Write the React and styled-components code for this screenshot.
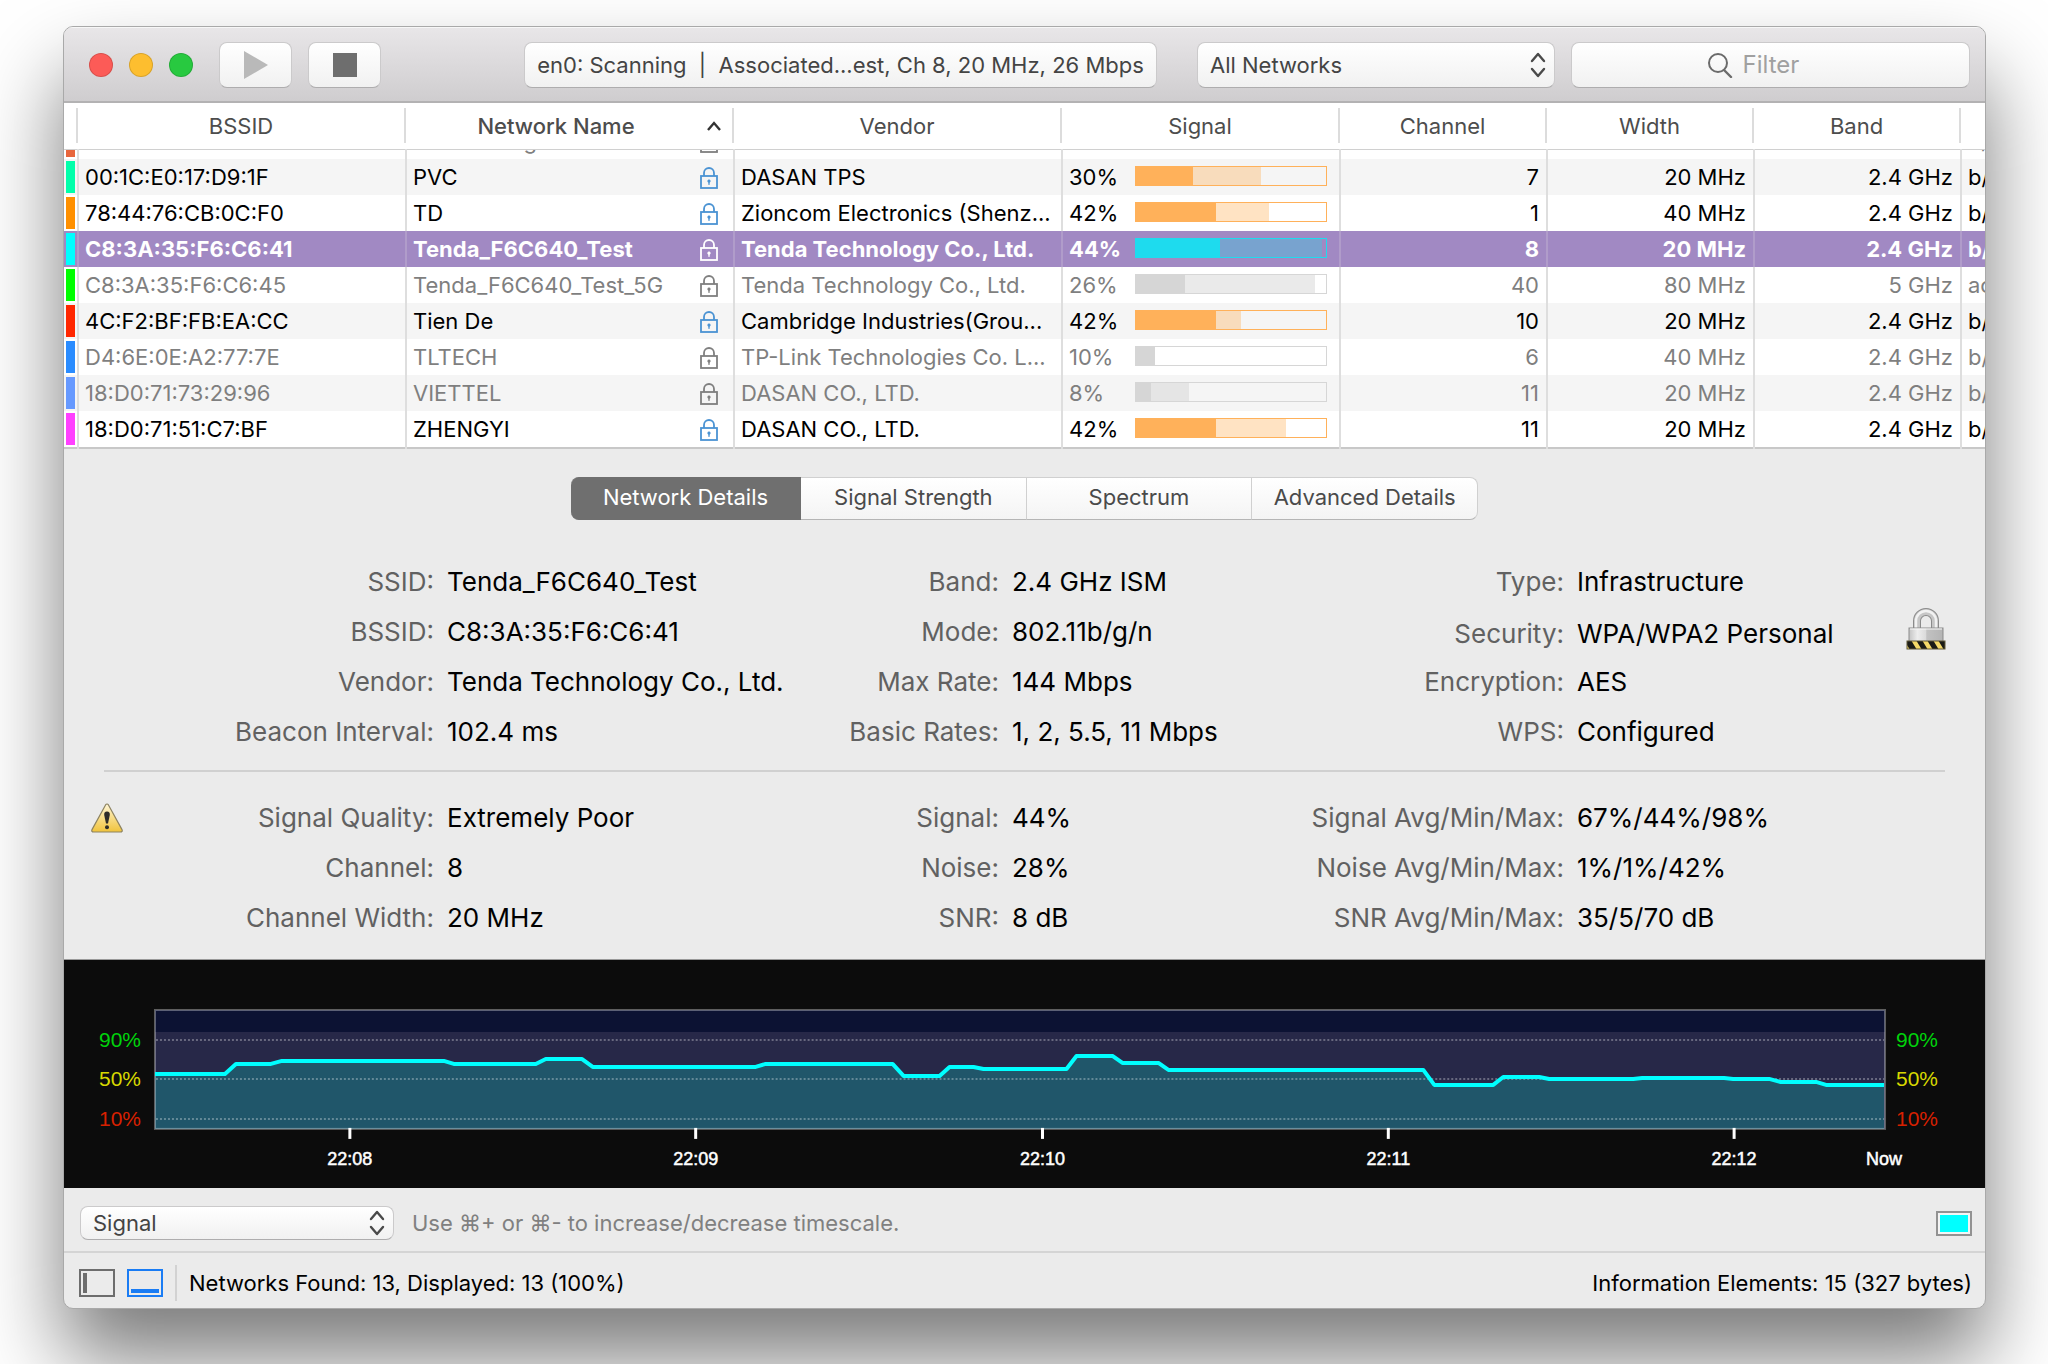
import { useState } from "react";
import styled, { createGlobalStyle, css } from "styled-components";

const columns = [
  { key: "bssid", label: "BSSID", width: 328 },
  { key: "name", label: "Network Name", width: 328, sorted: true },
  { key: "vendor", label: "Vendor", width: 328 },
  { key: "signal", label: "Signal", width: 278 },
  { key: "channel", label: "Channel", width: 207 },
  { key: "width", label: "Width", width: 207 },
  { key: "band", label: "Band", width: 207 },
];

const networks = [
  {
    color: "#e8663d",
    name: "Thanh Long",
    signal: 20,
    peak: 20,
    mode: "b/g/n",
    tone: "dim",
    clipped: true,
  },
  {
    color: "#00ffaa",
    bssid: "00:1C:E0:17:D9:1F",
    name: "PVC",
    vendor: "DASAN TPS",
    signal: 30,
    peak: 66,
    channel: "7",
    width: "20 MHz",
    band: "2.4 GHz",
    mode: "b/g/n",
  },
  {
    color: "#ff9000",
    bssid: "78:44:76:CB:0C:F0",
    name: "TD",
    vendor: "Zioncom Electronics (Shenz...",
    signal: 42,
    peak: 70,
    channel: "1",
    width: "40 MHz",
    band: "2.4 GHz",
    mode: "b/g/n",
  },
  {
    color: "#00ffff",
    bssid: "C8:3A:35:F6:C6:41",
    name: "Tenda_F6C640_Test",
    vendor: "Tenda Technology Co., Ltd.",
    signal: 44,
    peak: 98,
    channel: "8",
    width: "20 MHz",
    band: "2.4 GHz",
    mode: "b/g/n",
    tone: "selected",
  },
  {
    color: "#00ff00",
    bssid: "C8:3A:35:F6:C6:45",
    name: "Tenda_F6C640_Test_5G",
    vendor: "Tenda Technology Co., Ltd.",
    signal: 26,
    peak: 94,
    channel: "40",
    width: "80 MHz",
    band: "5 GHz",
    mode: "ac",
    tone: "dim",
  },
  {
    color: "#ff2600",
    bssid: "4C:F2:BF:FB:EA:CC",
    name: "Tien De",
    vendor: "Cambridge Industries(Grou...",
    signal: 42,
    peak: 55,
    channel: "10",
    width: "20 MHz",
    band: "2.4 GHz",
    mode: "b/g/n",
  },
  {
    color: "#2a8cff",
    bssid: "D4:6E:0E:A2:77:7E",
    name: "TLTECH",
    vendor: "TP-Link Technologies Co. L...",
    signal: 10,
    peak: 10,
    channel: "6",
    width: "40 MHz",
    band: "2.4 GHz",
    mode: "b/g/n",
    tone: "dim",
  },
  {
    color: "#6699ff",
    bssid: "18:D0:71:73:29:96",
    name: "VIETTEL",
    vendor: "DASAN CO., LTD.",
    signal: 8,
    peak: 28,
    channel: "11",
    width: "20 MHz",
    band: "2.4 GHz",
    mode: "b/g/n",
    tone: "dim",
  },
  {
    color: "#ff40ff",
    bssid: "18:D0:71:51:C7:BF",
    name: "ZHENGYI",
    vendor: "DASAN CO., LTD.",
    signal: 42,
    peak: 79,
    channel: "11",
    width: "20 MHz",
    band: "2.4 GHz",
    mode: "b/g/n",
  },
];

const tabs = [
  "Network Details",
  "Signal Strength",
  "Spectrum",
  "Advanced Details",
];

const networkInfo = [
  [
    ["SSID", "Tenda_F6C640_Test"],
    ["BSSID", "C8:3A:35:F6:C6:41"],
    ["Vendor", "Tenda Technology Co., Ltd."],
    ["Beacon Interval", "102.4 ms"],
  ],
  [
    ["Band", "2.4 GHz ISM"],
    ["Mode", "802.11b/g/n"],
    ["Max Rate", "144 Mbps"],
    ["Basic Rates", "1, 2, 5.5, 11 Mbps"],
  ],
  [
    ["Type", "Infrastructure"],
    ["Security", "WPA/WPA2 Personal", "lock"],
    ["Encryption", "AES"],
    ["WPS", "Configured"],
  ],
];

const signalInfo = [
  [
    ["Signal Quality", "Extremely Poor", "warning"],
    ["Channel", "8"],
    ["Channel Width", "20 MHz"],
  ],
  [
    ["Signal", "44%"],
    ["Noise", "28%"],
    ["SNR", "8 dB"],
  ],
  [
    ["Signal Avg/Min/Max", "67%/44%/98%"],
    ["Noise Avg/Min/Max", "1%/1%/42%"],
    ["SNR Avg/Min/Max", "35/5/70 dB"],
  ],
];

const signalLine =
  "91,114 161,114 172,104 207,104 218,101 380,101 390,104 472,104 482,99 518,99 529,107 692,107 702,104 829,104 840,116 876,116 886,107 910,107 920,109 1003,109 1013,96 1049,96 1059,103 1095,103 1105,110 1360,110 1371,125 1430,125 1440,117 1476,117 1486,119 1570,119 1579,118 1661,118 1670,119 1706,119 1717,122 1753,122 1763,125 1821,125";

const levels = [
  { label: "90%", y: 80, color: "#00d30b" },
  { label: "50%", y: 119, color: "#d8d800" },
  { label: "10%", y: 159, color: "#d82000" },
];

const times = [
  { label: "22:08", x: 286 },
  { label: "22:09", x: 632 },
  { label: "22:10", x: 979 },
  { label: "22:11", x: 1325 },
  { label: "22:12", x: 1671 },
];

const LockGlyph = () => (
  <svg width="18" height="22" viewBox="0 0 18 22" fill="none">
    <path
      d="M4 9V6a5 5 0 0 1 10 0v3"
      stroke="currentColor"
      strokeWidth="1.8"
    />
    <rect
      x="1"
      y="9"
      width="16"
      height="12"
      stroke="currentColor"
      strokeWidth="1.8"
    />
    <path
      d="M9 12.6a1.6 1.6 0 0 1 .8 3l-.3 2.4h-1l-.3-2.4a1.6 1.6 0 0 1 .8-3z"
      fill="currentColor"
    />
  </svg>
);

const Chevrons = () => (
  <ChevronIcon width="18" height="28" viewBox="0 0 18 28" fill="none">
    <path
      d="M3 10l6-7 6 7M3 18l6 7 6-7"
      stroke="#4a4a4a"
      strokeWidth="2.4"
      strokeLinecap="round"
      strokeLinejoin="round"
    />
  </ChevronIcon>
);

const WarningIcon = () => (
  <svg width="32" height="30" viewBox="0 0 32 30">
    <defs>
      <linearGradient id="warn" x1="0" y1="0" x2="0" y2="1">
        <stop offset="0" stopColor="#fff6d8" />
        <stop offset="0.5" stopColor="#f8dc86" />
        <stop offset="1" stopColor="#f0c33c" />
      </linearGradient>
    </defs>
    <path
      d="M14.4 2.2q1.6-2.4 3.2 0L31 26.6q.9 2.4-1.6 2.4H2.6Q.1 29 1 26.6z"
      fill="url(#warn)"
      stroke="#8d8361"
      strokeWidth="1.2"
    />
    <path
      d="M16 8.5c2.2 0 3 1.4 2.8 3.6L17 20.600h-2l-1.800-8.500c-.2-2.200.6-3.600 2.800-3.600z"
      fill="#2e2c28"
    />
    <circle cx="16" cy="24.2" r="2" fill="#2e2c28" />
  </svg>
);

const PadlockIcon = () => (
  <svg width="40" height="43" viewBox="0 0 40 43">
    <defs>
      <linearGradient id="steel" x1="0" y1="0" x2="1" y2="0">
        <stop offset="0" stopColor="#c4c4c4" />
        <stop offset="0.25" stopColor="#ededed" />
        <stop offset="0.5" stopColor="#dadada" />
        <stop offset="0.52" stopColor="#c2c2c2" />
        <stop offset="1" stopColor="#b4b4b4" />
      </linearGradient>
      <clipPath id="tape">
        <rect x="1" y="34" width="38" height="8" />
      </clipPath>
    </defs>
    <path
      d="M11 22V14a9 9 0 0 1 18 0V22"
      fill="none"
      stroke="#8b8b8b"
      strokeWidth="8"
    />
    <path
      d="M11 22V14a9 9 0 0 1 18 0V22"
      fill="none"
      stroke="#c6c6c6"
      strokeWidth="6"
    />
    <path
      d="M10 22V14a10 10 0 0 1 20 0V22"
      fill="none"
      stroke="#f2f2f2"
      strokeWidth="2.4"
    />
    <rect x="3" y="21" width="34" height="14" fill="url(#steel)" stroke="#8b8b8b" />
    <path d="M4 22h32" stroke="#f8f8f8" />
    <g clipPath="url(#tape)">
      <rect x="1" y="34" width="38" height="8" fill="#f5d968" />
      <path
        d="M-2 33h7l6 10H4zM10 33h6l6 10h-6zM21 33h6l6 10h-6zM32 33h6l6 10h-6z"
        fill="#1b1b17"
      />
    </g>
    <rect x="1" y="34" width="38" height="8" fill="none" stroke="#5e5636" />
  </svg>
);

const SearchIcon = () => (
  <svg width="26" height="26" viewBox="0 0 26 26" fill="none">
    <circle cx="11" cy="11" r="9" stroke="#6b6b6b" strokeWidth="2" />
    <path
      d="M17 18l7 7"
      stroke="#6b6b6b"
      strokeWidth="2.4"
      strokeLinecap="round"
    />
  </svg>
);

const NetworkRow = ({ network, striped }) => {
  const { tone, clipped } = network;
  return (
    <Row $tone={tone} $striped={striped}>
      <Cell>
        <CellBody $clipped={clipped} $tag>
          <ColorTag $color={network.color} />
        </CellBody>
      </Cell>
      <Cell>
        <CellBody $clipped={clipped}>{network.bssid}</CellBody>
      </Cell>
      <Cell>
        <CellBody $clipped={clipped} $between>
          <span>{network.name}</span>
          <LockSlot $tone={tone}>
            <LockGlyph />
          </LockSlot>
        </CellBody>
      </Cell>
      <Cell>
        <CellBody $clipped={clipped}>{network.vendor}</CellBody>
      </Cell>
      <Cell>
        <CellBody $clipped={clipped}>
          <Percent>{clipped ? "" : `${network.signal}%`}</Percent>
          <Meter $tone={tone}>
            <MeterPeak $tone={tone} style={{ width: `${network.peak}%` }} />
            <MeterFill $tone={tone} style={{ width: `${network.signal}%` }} />
          </Meter>
        </CellBody>
      </Cell>
      {["channel", "width", "band"].map((key) => (
        <Cell key={key}>
          <CellBody $clipped={clipped} $right>
            {network[key]}
          </CellBody>
        </Cell>
      ))}
      <Cell>
        <CellBody $clipped={clipped}>{network.mode}</CellBody>
      </Cell>
    </Row>
  );
};

const InfoGroups = ({ groups }) => (
  <Groups>
    {groups.map((rows) => (
      <Group key={rows[0][0]}>
        {rows.map(([label, value, icon]) => (
          <InfoRow key={label}>
            <dt>
              {icon === "warning" && (
                <WarningSlot>
                  <WarningIcon />
                </WarningSlot>
              )}
              {label}:
            </dt>
            <dd>
              {value}
              {icon === "lock" && (
                <PadlockSlot>
                  <PadlockIcon />
                </PadlockSlot>
              )}
            </dd>
          </InfoRow>
        ))}
      </Group>
    ))}
  </Groups>
);

const SignalChart = () => (
  <ChartPanel>
    <svg viewBox="0 0 1922 229" role="img" aria-label="Signal over time">
      <rect x="91" y="50" width="1731" height="119" fill="#0c1233" />
      <rect x="91" y="72" width="1731" height="97" fill="#272848" />
      <polygon points={`${signalLine} 1821,169 91,169`} fill="#20566a" />
      {levels.map((level) => (
        <line
          key={level.label}
          x1="92"
          x2="1821"
          y1={level.y}
          y2={level.y}
          stroke="#ffffff"
          strokeOpacity="0.3"
          strokeWidth="2"
          strokeDasharray="2 2"
        />
      ))}
      <rect
        x="91"
        y="50"
        width="1731"
        height="119"
        fill="none"
        stroke="#ffffff"
        strokeOpacity="0.34"
        strokeWidth="2"
      />
      <polyline
        points={signalLine}
        fill="none"
        stroke="#00ffff"
        strokeWidth="4"
        strokeLinejoin="round"
      />
      {levels.map((level) => (
        <g key={level.label} fill={level.color} fontSize="21">
          <text x="77" y={level.y + 7} textAnchor="end">
            {level.label}
          </text>
          <text x="1833" y={level.y + 7}>
            {level.label}
          </text>
        </g>
      ))}
      <g fill="#ffffff" stroke="#ffffff" fontSize="18" textAnchor="middle">
        {times.map((time) => (
          <g key={time.label}>
            <path d={`M${time.x} 168v11`} strokeWidth="3" />
            <text x={time.x} y="205" strokeWidth="0.5">
              {time.label}
            </text>
          </g>
        ))}
        <text x="1821" y="205" strokeWidth="0.5">
          Now
        </text>
      </g>
    </svg>
  </ChartPanel>
);

const App = () => {
  const [activeTab, setActiveTab] = useState(tabs[0]);

  return (
    <>
      <GlobalStyle />
      <Window>
        <Toolbar>
          <TrafficLights>
            <Light $color="#fc5b57" aria-label="Close" />
            <Light $color="#fdbe2f" aria-label="Minimize" />
            <Light $color="#28c940" aria-label="Zoom" />
          </TrafficLights>
          <ToolButton aria-label="Start scan">
            <svg width="24" height="28" viewBox="0 0 24 28">
              <path d="M0 0l24 14L0 28z" fill="#b9b9b9" />
            </svg>
          </ToolButton>
          <ToolButton aria-label="Stop scan">
            <svg width="24" height="24" viewBox="0 0 24 24">
              <path d="M0 0h24v24H0z" fill="#6e6e6e" />
            </svg>
          </ToolButton>
          <ScanStatus>
            en0: Scanning&nbsp; | &nbsp;Associated...est, Ch 8, 20 MHz, 26 Mbps
          </ScanStatus>
          <SelectBox $large>
            <select aria-label="Network filter">
              <option>All Networks</option>
            </select>
            <Chevrons />
          </SelectBox>
          <SearchField>
            <SearchIcon />
            <input type="text" placeholder="Filter" aria-label="Filter" />
          </SearchField>
        </Toolbar>

        <NetworkTable>
          <colgroup>
            <Col $width={14} />
            {columns.map((column) => (
              <Col key={column.key} $width={column.width} />
            ))}
            <col />
          </colgroup>
          <thead>
            <tr>
              <HeaderCell>
                <HeaderLabel />
              </HeaderCell>
              {columns.map((column) => (
                <HeaderCell key={column.key}>
                  <HeaderLabel $sorted={column.sorted}>
                    <span>{column.label}</span>
                    {column.sorted && (
                      <svg width="16" height="12" viewBox="0 0 16 12" fill="none">
                        <path d="M2 10l6-7 6 7" stroke="#333" strokeWidth="2.4" />
                      </svg>
                    )}
                  </HeaderLabel>
                </HeaderCell>
              ))}
              <HeaderCell />
            </tr>
          </thead>
          <tbody>
            {networks.map((network, index) => (
              <NetworkRow
                key={network.color}
                network={network}
                striped={index % 2 === 1}
              />
            ))}
          </tbody>
        </NetworkTable>

        <Details>
          <Tabs role="tablist">
            {tabs.map((tab) => (
              <Tab
                key={tab}
                role="tab"
                aria-selected={tab === activeTab}
                $active={tab === activeTab}
                onClick={() => setActiveTab(tab)}
              >
                {tab}
              </Tab>
            ))}
          </Tabs>
          <InfoGroups groups={networkInfo} />
          <Divider />
          <InfoGroups groups={signalInfo} />
        </Details>

        <SignalChart />

        <ChartControls>
          <SelectBox>
            <select aria-label="Chart value">
              <option>Signal</option>
            </select>
            <Chevrons />
          </SelectBox>
          <Hint>Use ⌘+ or ⌘- to increase/decrease timescale.</Hint>
          <Swatch aria-label="Line color" />
        </ChartControls>

        <StatusBar>
          <PaneButton aria-label="Toggle sidebar">
            <svg width="36" height="28" viewBox="0 0 36 28">
              <rect
                x="1"
                y="1"
                width="34"
                height="26"
                fill="none"
                stroke="#6d6d6d"
                strokeWidth="2"
              />
              <rect x="4" y="4" width="4" height="20" fill="#6d6d6d" />
            </svg>
          </PaneButton>
          <PaneButton aria-label="Toggle details">
            <svg width="36" height="28" viewBox="0 0 36 28">
              <rect
                x="1"
                y="1"
                width="34"
                height="26"
                fill="none"
                stroke="#1a7cf4"
                strokeWidth="2"
              />
              <rect x="4" y="20" width="28" height="4" fill="#1a7cf4" />
            </svg>
          </PaneButton>
          <Found>Networks Found: 13, Displayed: 13 (100%)</Found>
          <span>Information Elements: 15 (327 bytes)</span>
        </StatusBar>
      </Window>
    </>
  );
};

const GlobalStyle = createGlobalStyle`
  * {
    box-sizing: border-box;
  }
  body {
    margin: 0;
    background: #fff;
    font-family: Inter, "Liberation Sans", sans-serif;
    font-size: 22px;
    color: #000;
  }
  #root {
    display: flow-root;
    overflow: hidden;
  }
  button,
  select,
  input {
    font: inherit;
    color: inherit;
    margin: 0;
    padding: 0;
  }
  svg {
    display: block;
    flex-shrink: 0;
  }
`;

const raised = css`
  background: linear-gradient(#fff, #f1f1f1);
  border: 1px solid #cbcacb;
  border-bottom-color: #aeadae;
  border-radius: 8px;
`;

const Window = styled.main`
  margin: 26px 62px 55px 63px;
  border: 1px solid #a9a9a9;
  border-radius: 10px;
  overflow: hidden;
  background: #ebebeb;
  box-shadow: 0 50px 84px rgba(0, 0, 0, 0.52);
`;

const Toolbar = styled.header`
  display: flex;
  align-items: center;
  gap: 16px;
  height: 76px;
  padding: 0 15px 0 25px;
  background: linear-gradient(#e8e6e8, #cfcdcf);
  border-top: 1px solid #f7f7f7;
  border-bottom: 2px solid #b3b2b3;
  color: #444;
`;

const TrafficLights = styled.div`
  display: flex;
  gap: 16px;
  margin-right: 10px;
`;

const Light = styled.button`
  width: 24px;
  height: 24px;
  border: 1px solid rgba(0, 0, 0, 0.14);
  border-radius: 50%;
  background: ${({ $color }) => $color};
`;

const ToolButton = styled.button`
  ${raised}
  display: flex;
  justify-content: center;
  align-items: center;
  width: 73px;
  height: 46px;
`;

const ScanStatus = styled.div`
  ${raised}
  display: flex;
  justify-content: center;
  align-items: center;
  width: 633px;
  height: 46px;
  margin: 0 24px 0 auto;
  white-space: nowrap;
`;

const SelectBox = styled.div`
  position: relative;
  width: ${({ $large }) => ($large ? "358px" : "314px")};
  select {
    ${raised}
    appearance: none;
    width: 100%;
    height: ${({ $large }) => ($large ? "46px" : "34px")};
    padding: 0 12px;
    color: #444;
  }
`;

const ChevronIcon = styled.svg`
  position: absolute;
  top: 50%;
  right: 8px;
  transform: translateY(-50%);
  pointer-events: none;
`;

const SearchField = styled.label`
  ${raised}
  display: flex;
  justify-content: center;
  align-items: center;
  gap: 10px;
  width: 399px;
  height: 46px;
  input {
    width: 92px;
    border: none;
    outline: none;
    background: none;
    font-size: 24px;
  }
  input::placeholder {
    color: #a0a0a0;
    opacity: 1;
  }
`;

const NetworkTable = styled.table`
  width: 100%;
  table-layout: fixed;
  border-collapse: collapse;
  background: #fff;
  border-bottom: 2px solid #c8c8c8;
`;

const Col = styled.col`
  width: ${({ $width }) => $width}px;
`;

const HeaderCell = styled.th`
  height: 46px;
  padding: 0;
  border-bottom: 1px solid #d0d0d0;
  font-weight: 400;
  color: #4d4d4d;
`;

const HeaderLabel = styled.div`
  display: flex;
  justify-content: center;
  align-items: center;
  height: 35px;
  border-right: 2px solid #dcdcdc;
  font-weight: ${({ $sorted }) => ($sorted ? 500 : 400)};
  padding-right: ${({ $sorted }) => ($sorted ? "10px" : 0)};
  span {
    flex: ${({ $sorted }) => ($sorted ? 1 : "none")};
  }
`;

const rowColor = { dim: "#7f7f7f", selected: "#fff" };

const Cell = styled.td`
  padding: 0;
  border-right: 2px solid #dedede;
  &:last-child {
    border-right: none;
  }
`;

const Row = styled.tr`
  color: ${({ $tone }) => rowColor[$tone] || "#000"};
  background: ${({ $striped }) => ($striped ? "#f5f5f5" : "#fff")};
  ${({ $tone }) =>
    $tone === "selected" &&
    css`
      background: #a189c3;
      font-weight: 700;
      ${Cell} {
        border-color: #b09cca;
      }
    `}
`;

const CellBody = styled.div`
  display: flex;
  align-items: ${({ $clipped }) => ($clipped ? "flex-end" : "center")};
  justify-content: ${({ $right, $between }) =>
    $right ? "flex-end" : $between ? "space-between" : "flex-start"};
  height: ${({ $clipped }) => ($clipped ? "9px" : "36px")};
  padding: ${({ $tag, $right }) =>
    $tag ? "0 2px" : $right ? "0 7px" : "0 0 0 6px"};
  overflow: hidden;
  line-height: 36px;
  white-space: nowrap;
`;

const ColorTag = styled.span`
  width: 9px;
  height: 32px;
  margin-bottom: 2px;
  align-self: flex-end;
  background: ${({ $color }) => $color};
`;

const lockColor = { dim: "#7f7f7f", selected: "#fff" };

const LockSlot = styled.span`
  padding: 8px 15px 6px 0;
  color: ${({ $tone }) => lockColor[$tone] || "#4b93d3"};
`;

const Percent = styled.span`
  width: 66px;
  flex-shrink: 0;
`;

const meterTones = {
  dim: ["#d6d6d6", "rgba(214, 214, 214, 0.5)"],
  selected: ["#1edbee", "rgba(80, 190, 220, 0.5)"],
  normal: ["#ffb15a", "rgba(255, 177, 90, 0.36)"],
};

const meterTone = (tone) => meterTones[tone] || meterTones.normal;

const Meter = styled.div`
  display: grid;
  width: 192px;
  height: 20px;
  flex-shrink: 0;
  margin: 7px 0 9px;
  border: 1px solid ${({ $tone }) => meterTone($tone)[0]};
`;

const MeterPeak = styled.div`
  grid-area: 1 / 1;
  background: ${({ $tone }) => meterTone($tone)[1]};
`;

const MeterFill = styled.div`
  grid-area: 1 / 1;
  background: ${({ $tone }) => meterTone($tone)[0]};
`;

const Details = styled.section`
  padding: 28px 0 16px;
`;

const Tabs = styled.div`
  display: grid;
  grid-template-columns: 230px 1fr 1fr 1fr;
  width: 907px;
  max-width: 100%;
  margin: 0 auto 37px;
`;

const Tab = styled.button`
  height: 43px;
  padding-bottom: 2px;
  background: ${({ $active }) =>
    $active ? "#6f6f6f" : "linear-gradient(#fff, #f4f4f4)"};
  color: ${({ $active }) => ($active ? "#fff" : "#4a4a4a")};
  border: 1px solid #d0d0d0;
  border-bottom-color: #b5b5b5;
  border-left-width: 0;
  &:first-child {
    border-radius: 8px 0 0 8px;
    border-color: #6f6f6f;
  }
  &:last-child {
    border-radius: 0 8px 8px 0;
  }
`;

const Groups = styled.div`
  display: grid;
  grid-template-columns: minmax(0, 5fr) minmax(0, 5fr) minmax(0, 7fr);
  font-size: 26px;
`;

const Group = styled.dl`
  margin: 0;
`;

const InfoRow = styled.div`
  display: grid;
  grid-template-columns: 370px 1fr;
  align-items: center;
  height: 50px;
  white-space: nowrap;
  dt {
    display: flex;
    justify-content: flex-end;
    align-items: center;
    color: #616161;
  }
  dd {
    display: flex;
    align-items: center;
    margin: 0;
    padding-left: 13px;
  }
`;

const WarningSlot = styled.span`
  margin: 0 auto 0 27px;
`;

const PadlockSlot = styled.span`
  margin: 0 39px 0 auto;
  padding-bottom: 10px;
`;

const Divider = styled.hr`
  height: 2px;
  margin: 13px 40px 21px;
  border: none;
  background: #d0d0d0;
`;

const ChartPanel = styled.section`
  background: #0c0c0c;
  border-top: 1px solid #999;
  svg {
    width: 100%;
    height: auto;
    font-family: "Liberation Sans", Arial, sans-serif;
  }
`;

const ChartControls = styled.section`
  display: flex;
  align-items: center;
  gap: 18px;
  height: 65px;
  padding: 7px 13px 0 16px;
  border-bottom: 2px solid #d4d4d4;
`;

const Hint = styled.p`
  margin: 0;
  color: #808080;
`;

const Swatch = styled.button`
  width: 36px;
  height: 25px;
  margin-left: auto;
  border: 2px solid #929292;
  background: #00ffff;
  box-shadow: inset 0 0 0 2px #f4f4f4;
`;

const StatusBar = styled.footer`
  display: flex;
  align-items: center;
  height: 55px;
  padding: 4px 13px 0 15px;
`;

const PaneButton = styled.button`
  margin-right: 12px;
  border: none;
  background: none;
`;

const Found = styled.span`
  margin-right: auto;
  padding-left: 12px;
  border-left: 2px solid #d2d2d2;
  line-height: 36px;
`;

export default App;
